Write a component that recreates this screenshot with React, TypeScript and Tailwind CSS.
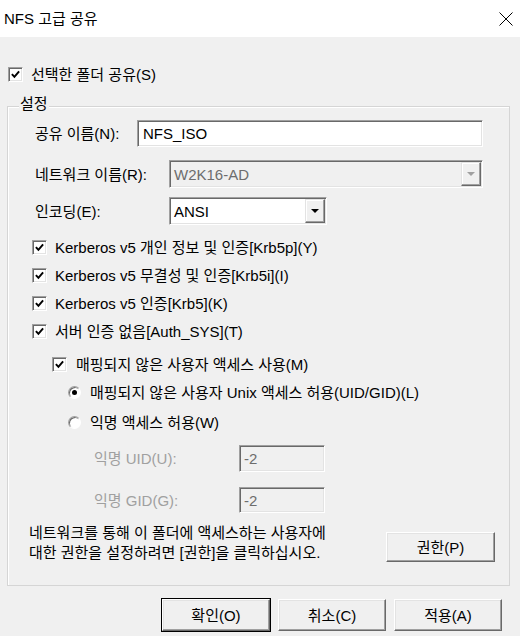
import React from 'react'

function Check({ checked = true }: { checked?: boolean }) {
  return (
    <span className="flex h-[15px] w-[15px] shrink-0 items-center justify-center border border-t-[#a0a0a0] border-l-[#a0a0a0] border-b-white border-r-white bg-white shadow-[inset_1px_1px_0_#696969,inset_-1px_-1px_0_#e3e3e3]">
      {checked && (
        <svg viewBox="0 0 10 10" className="h-[9px] w-[9px]">
          <path d="M1 4.6 L3.8 7.6 L9 1.6" stroke="#000" strokeWidth={2.2} fill="none" />
        </svg>
      )}
    </span>
  )
}

function Radio({ checked = false }: { checked?: boolean }) {
  return (
    <span className="flex h-[13px] w-[13px] shrink-0 items-center justify-center rounded-full border border-t-[#a0a0a0] border-l-[#a0a0a0] border-b-white border-r-white bg-white shadow-[inset_1px_1px_0_#696969]">
      {checked && <span className="h-[5px] w-[5px] rounded-full bg-black" />}
    </span>
  )
}

function Arrow({ disabled = false }: { disabled?: boolean }) {
  return (
    <span className="flex h-full w-[20px] items-center justify-center border border-t-[#e3e3e3] border-l-[#e3e3e3] border-b-[#696969] border-r-[#696969] bg-[#f0f0f0] shadow-[inset_-1px_-1px_0_#a0a0a0,inset_1px_1px_0_#fff]">
      <svg viewBox="0 0 8 4" className="h-[4px] w-[8px]">
        <path d="M0 0 H8 L4 4 Z" fill={disabled ? '#a0a0a0' : '#000'} />
      </svg>
    </span>
  )
}

function Button({ children, isDefault = false, className = '' }: { children: React.ReactNode; isDefault?: boolean; className?: string }) {
  return (
    <div className={`${isDefault ? 'border border-black' : 'border border-transparent'} ${className}`}>
      <div className="flex h-full w-full items-center justify-center border border-t-[#fff] border-l-[#fff] border-b-[#696969] border-r-[#696969] bg-[#f0f0f0] shadow-[inset_-1px_-1px_0_#a0a0a0,inset_1px_1px_0_#e3e3e3] text-[15px] leading-none text-black">
        {children}
      </div>
    </div>
  )
}

const sunken =
  'border border-t-[#a0a0a0] border-l-[#a0a0a0] border-b-white border-r-white shadow-[inset_1px_1px_0_#696969,inset_-1px_-1px_0_#e3e3e3]'

const checks = [
  'Kerberos v5 개인 정보 및 인증[Krb5p](Y)',
  'Kerberos v5 무결성 및 인증[Krb5i](I)',
  'Kerberos v5 인증[Krb5](K)',
  '서버 인증 없음[Auth_SYS](T)',
]

export default function App() {
  return (
    <div className="h-[636px] w-[520px] overflow-hidden bg-[#f0f0f0] font-['Liberation_Sans','Noto_Sans_CJK_KR',sans-serif] text-[15px] text-black">
      {/* title bar */}
      <div className="flex h-[37px] items-center justify-between bg-white pl-[4px] pr-[7px]">
        <span className="leading-none">NFS 고급 공유</span>
        <svg viewBox="0 0 14 14" className="h-[14px] w-[14px]">
          <path d="M0.5 0.5 L13.5 13.5 M13.5 0.5 L0.5 13.5" stroke="#000" strokeWidth={1} />
        </svg>
      </div>

      <div className="flex h-[20px] items-center gap-[8px] pl-[8px] mt-[27px] leading-none">
        <Check />
        <span>선택한 폴더 공유(S)</span>
      </div>

      {/* group box */}
      <div className="relative mx-[7px] mt-[22px] box-border flex h-[480px] w-[503px] flex-col border border-[#d5d5d5] pt-[13px] shadow-[inset_1px_1px_0_#fff]">
        <span className="absolute left-[11px] top-[-13px] bg-[#f0f0f0] px-[1px] leading-[20px]">설정</span>

        <div className="flex h-[27px] items-center pl-[27px] leading-none">
          <span className="w-[102px]">공유 이름(N):</span>
          <div className={`flex h-full w-[346px] items-center bg-white pl-[5px] ${sunken}`}>NFS_ISO</div>
        </div>

        <div className="mt-[13px] flex h-[28px] items-center pl-[27px] leading-none">
          <span className="w-[134px]">네트워크 이름(R):</span>
          <div className={`flex h-full w-[314px] items-center bg-[#f0f0f0] p-[1px] pl-[4px] ${sunken}`}>
            <span className="flex-1 text-[#6d6d6d]">W2K16-AD</span>
            <Arrow disabled />
          </div>
        </div>

        <div className="mt-[9px] flex h-[28px] items-center pl-[27px] leading-none">
          <span className="w-[134px]">인코딩(E):</span>
          <div className={`flex h-full w-[158px] items-center bg-white p-[1px] pl-[4px] ${sunken}`}>
            <span className="flex-1">ANSI</span>
            <Arrow />
          </div>
        </div>

        <div className="mt-[8px] flex flex-col">
          {checks.map((c) => (
            <div key={c} className="flex h-[28px] items-center gap-[8px] pl-[24px] leading-none">
              <Check />
              <span>{c}</span>
            </div>
          ))}
        </div>

        <div className="mt-[5px] flex h-[28px] items-center gap-[9px] pl-[44px] leading-none">
          <Check />
          <span>매핑되지 않은 사용자 액세스 사용(M)</span>
        </div>
        <div className="flex h-[28px] items-center gap-[9px] pl-[60px] leading-none">
          <Radio checked />
          <span>매핑되지 않은 사용자 Unix 액세스 허용(UID/GID)(L)</span>
        </div>
        <div className="mt-[2px] flex h-[28px] items-center gap-[9px] pl-[60px] leading-none">
          <Radio />
          <span>익명 액세스 허용(W)</span>
        </div>

        <div className="mt-[9px] flex h-[27px] items-center pl-[86px] leading-none">
          <span className="w-[145px] text-[#a0a0a0]">익명 UID(U):</span>
          <div className={`flex h-full w-[86px] items-center bg-[#f0f0f0] pl-[4px] text-[#6d6d6d] ${sunken}`}>-2</div>
        </div>
        <div className="mt-[15px] flex h-[26px] items-center pl-[86px] leading-none">
          <span className="w-[145px] text-[#a0a0a0]">익명 GID(G):</span>
          <div className={`flex h-full w-[86px] items-center bg-[#f0f0f0] pl-[4px] text-[#6d6d6d] ${sunken}`}>-2</div>
        </div>

        <div className="mt-[10px] flex items-start pl-[21px] pr-[13px]">
          <p className="leading-[20px]">
            네트워크를 통해 이 폴더에 액세스하는 사용자에
            <br />
            대한 권한을 설정하려면 [권한]을 클릭하십시오.
          </p>
          <Button className="ml-auto mt-[8px] h-[32px] w-[111px]">권한(P)</Button>
        </div>
      </div>

      <div className="mt-[12px] flex justify-end gap-[6px] pr-[17px]">
        <Button isDefault className="h-[34px] w-[110px]">확인(O)</Button>
        <Button className="h-[34px] w-[110px]">취소(C)</Button>
        <Button className="h-[34px] w-[110px]">적용(A)</Button>
      </div>
    </div>
  )
}
